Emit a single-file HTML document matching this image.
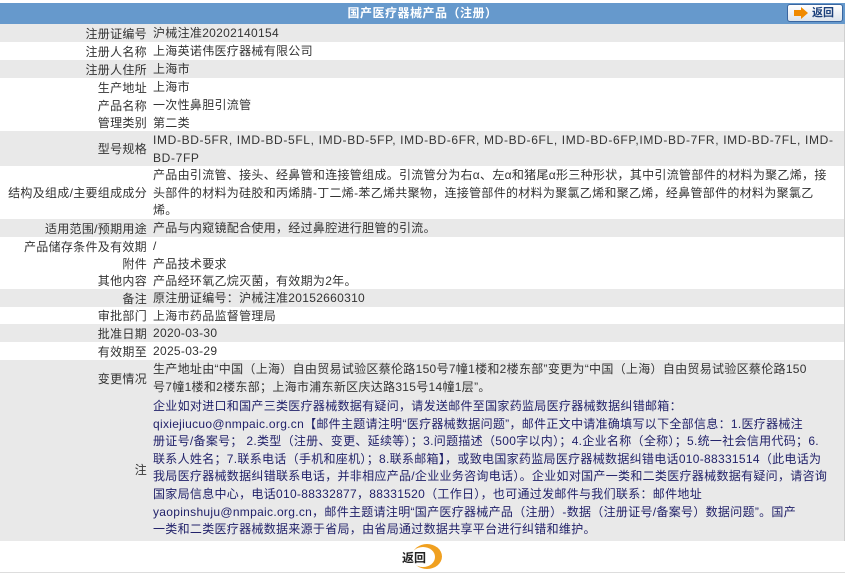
<!DOCTYPE html>
<html><head><meta charset="utf-8"><style>
*{margin:0;padding:0;box-sizing:border-box}
body{width:850px;height:577px;background:#fff;font-family:"Liberation Sans","Noto Sans CJK SC",sans-serif;font-size:12px;color:#333;position:relative;overflow:hidden}
.hd{position:absolute;left:0;top:3px;width:845px;height:21px;background:#6699cc;color:#fff;font-weight:bold;text-align:center;line-height:21px;font-size:12px;letter-spacing:0.5px}
.btn{position:absolute;left:787px;top:4px;width:56px;height:18px;border:1px solid #3a66a0;border-radius:3px;background:linear-gradient(#ffffff,#dde4ec);color:#1a3f7a;font-weight:bold;line-height:16px;font-size:11px;padding-left:24px}
.btn:before{content:"";position:absolute;left:6px;top:3px;width:7px;height:6px;background:#f08a00;margin-top:2px}
.btn:after{content:"";position:absolute;left:13px;top:2px;border-left:7px solid #f08a00;border-top:6px solid transparent;border-bottom:6px solid transparent}
.r{position:absolute;left:0;width:845px;display:flex}
.g{background:#e9e9e9}
.l{width:147px;text-align:right;flex:none;display:flex;align-items:center;justify-content:flex-end;letter-spacing:0.3px;white-space:nowrap}
.v{padding-left:6px;line-height:17.6px;padding-top:1px;white-space:nowrap;letter-spacing:0.3px}
.rb{position:absolute;left:844px;top:24px;width:1px;height:517px;background:#d0d0d0}
.n{color:#22226a}
</style></head><body>
<div class="hd">国产医疗器械产品（注册）</div>
<div class="btn">返回</div>
<div class="r g" style="top:24px;height:18px"><div class="l">注册证编号</div><div class="v">沪械注准20202140154</div></div>
<div class="r" style="top:42px;height:18px"><div class="l">注册人名称</div><div class="v">上海英诺伟医疗器械有限公司</div></div>
<div class="r g" style="top:60px;height:18px"><div class="l">注册人住所</div><div class="v">上海市</div></div>
<div class="r" style="top:78px;height:18px"><div class="l">生产地址</div><div class="v">上海市</div></div>
<div class="r" style="top:96px;height:18px"><div class="l">产品名称</div><div class="v">一次性鼻胆引流管</div></div>
<div class="r" style="top:114px;height:17px"><div class="l">管理类别</div><div class="v">第二类</div></div>
<div class="r g" style="top:131px;height:35px"><div class="l">型号规格</div><div class="v" style="letter-spacing:0.65px">IMD-BD-5FR, IMD-BD-5FL, IMD-BD-5FP, IMD-BD-6FR, MD-BD-6FL, IMD-BD-6FP,IMD-BD-7FR, IMD-BD-7FL, IMD-<br>BD-7FP</div></div>
<div class="r" style="top:166px;height:53px"><div class="l">结构及组成/主要组成成分</div><div class="v">产品由引流管、接头、经鼻管和连接管组成。引流管分为右α、左α和猪尾α形三种形状，其中引流管部件的材料为聚乙烯，接<br>头部件的材料为硅胶和丙烯腈-丁二烯-苯乙烯共聚物，连接管部件的材料为聚氯乙烯和聚乙烯，经鼻管部件的材料为聚氯乙<br>烯。</div></div>
<div class="r g" style="top:219px;height:18px"><div class="l">适用范围/预期用途</div><div class="v">产品与内窥镜配合使用，经过鼻腔进行胆管的引流。</div></div>
<div class="r" style="top:237px;height:18px"><div class="l">产品储存条件及有效期</div><div class="v">/</div></div>
<div class="r" style="top:255px;height:17px"><div class="l">附件</div><div class="v">产品技术要求</div></div>
<div class="r" style="top:272px;height:17px"><div class="l">其他内容</div><div class="v">产品经环氧乙烷灭菌，有效期为2年。</div></div>
<div class="r g" style="top:289px;height:18px"><div class="l">备注</div><div class="v">原注册证编号：沪械注准20152660310</div></div>
<div class="r" style="top:307px;height:17px"><div class="l">审批部门</div><div class="v">上海市药品监督管理局</div></div>
<div class="r g" style="top:324px;height:18px"><div class="l">批准日期</div><div class="v">2020-03-30</div></div>
<div class="r" style="top:342px;height:18px"><div class="l">有效期至</div><div class="v">2025-03-29</div></div>
<div class="r g" style="top:360px;height:37px"><div class="l">变更情况</div><div class="v">生产地址由“中国（上海）自由贸易试验区蔡伦路150号7幢1楼和2楼东部”变更为“中国（上海）自由贸易试验区蔡伦路150<br>号7幢1楼和2楼东部；上海市浦东新区庆达路315号14幢1层”。</div></div>
<div class="r g" style="top:397px;height:144px"><div class="l">注</div><div class="v n">企业如对进口和国产三类医疗器械数据有疑问，请发送邮件至国家药监局医疗器械数据纠错邮箱：<br>qixiejiucuo@nmpaic.org.cn【邮件主题请注明“医疗器械数据问题”，邮件正文中请准确填写以下全部信息：1.医疗器械注<br>册证号/备案号； 2.类型（注册、变更、延续等）；3.问题描述（500字以内）；4.企业名称（全称）；5.统一社会信用代码；6.<br>联系人姓名；7.联系电话（手机和座机）；8.联系邮箱】，或致电国家药监局医疗器械数据纠错电话010-88331514（此电话为<br>我局医疗器械数据纠错联系电话，并非相应产品/企业业务咨询电话）。企业如对国产一类和二类医疗器械数据有疑问，请咨询<br>国家局信息中心，电话010-88332877，88331520（工作日），也可通过发邮件与我们联系：邮件地址<br>yaopinshuju@nmpaic.org.cn，邮件主题请注明“国产医疗器械产品（注册）-数据（注册证号/备案号）数据问题”。国产<br>一类和二类医疗器械数据来源于省局，由省局通过数据共享平台进行纠错和维护。</div></div>
<div class="rb"></div>
<div style="position:absolute;left:412px;top:544px;width:30px;height:25px;border-radius:50%;background:#f0a020"></div>
<div style="position:absolute;left:411px;top:547px;width:24px;height:20px;border-radius:50%;background:#fff"></div>
<div style="position:absolute;left:402px;top:549px;font-weight:bold;color:#222;font-size:12px">返回</div>
<div style="position:absolute;left:0;top:572px;width:845px;height:1px;background:#ddd"></div>
</body></html>
